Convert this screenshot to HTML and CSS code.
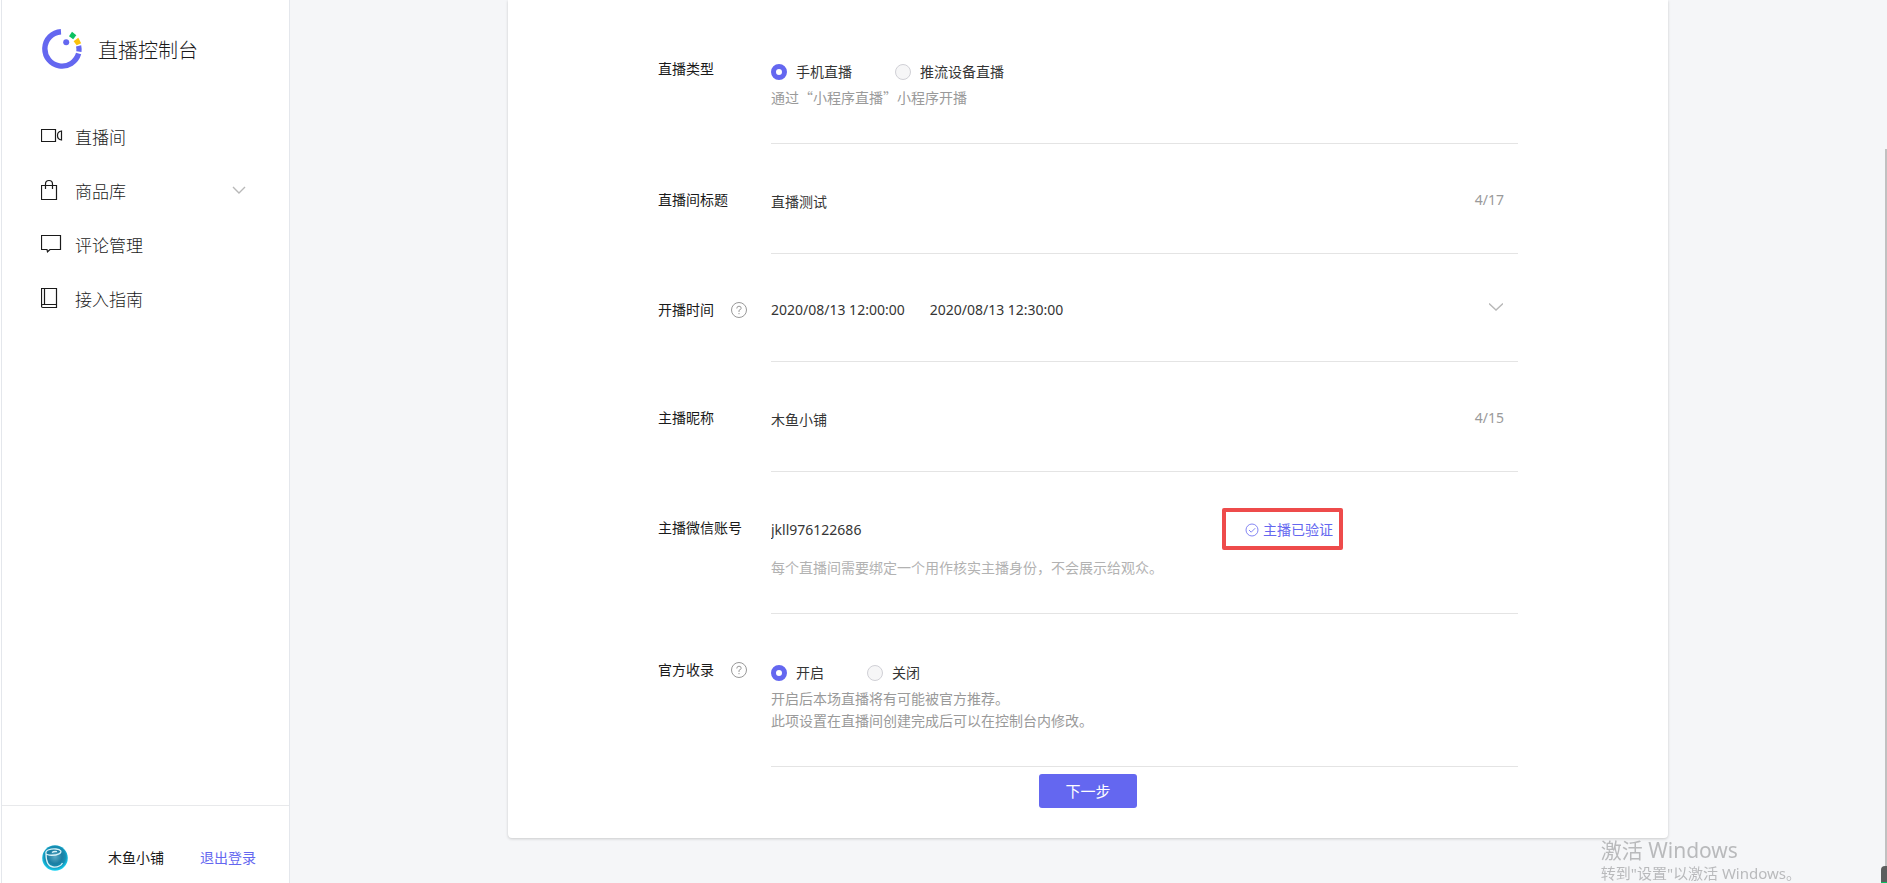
FILE: index.html
```html
<!DOCTYPE html>
<html lang="zh-CN">
<head>
<meta charset="utf-8">
<title>直播控制台</title>
<link rel="stylesheet" href="styles.css">
</head>
<body>
<div class="app">
  <aside class="sidebar">
    <div class="brand">
      <svg class="brand-logo" viewBox="0 0 40 40" aria-hidden="true">
        <path d="M19 2.700A17.200 17.200 0 1 0 36.600 24.600" fill="none" stroke="#6467f0" stroke-width="5.400"/>
        <path d="M34 17.400L39.200 16.200Q39.900 19.500 39.500 23L34.300 22.200Q34.600 19.500 34 17.400Z" fill="#6467f0"/>
        <path d="M31.600 12.200L36.300 8.800L39.200 14.200L34.600 16.200Z" fill="#fbc30c"/>
        <path d="M27 7.200L30 2.800L34.300 6.200L31.200 10.200Z" fill="#0cc160"/>
        <circle cx="24.200" cy="13.300" r="3" fill="#6467f0"/>
      </svg>
      <span class="brand-name">直播控制台</span>
    </div>
    <nav class="menu">
      <a class="menu-item" href="#rooms">
        <svg class="menu-icon" viewBox="0 0 22 22" aria-hidden="true"><path d="M.5 4.500h14v12h-14zM20.500 6q-4 .5-4 4.500t4 4.500z"/></svg>
        <span class="menu-text">直播间</span>
      </a>
      <a class="menu-item" href="#goods">
        <svg class="menu-icon" viewBox="0 0 22 22" aria-hidden="true"><path d="M.5 6.500h15v14h-15zM4.500 10V5q0-3.500 3.500-3.500T11.500 5v5"/></svg>
        <span class="menu-text">商品库</span>
        <svg class="chevron menu-chevron" viewBox="0 0 14 8" aria-hidden="true"><path d="M1 1l6 6 6-6"/></svg>
      </a>
      <a class="menu-item" href="#comments">
        <svg class="menu-icon" viewBox="0 0 22 22" aria-hidden="true"><path d="M.5 2.500h19v14H9l-2.500 2.300L6 16.500H.5z"/></svg>
        <span class="menu-text">评论管理</span>
      </a>
      <a class="menu-item" href="#guide">
        <svg class="menu-icon" viewBox="0 0 22 22" aria-hidden="true"><path d="M.5 1.500h15v19H2q-1.500 0-1.500-1.500zM3.500 1.500v16M15.500 17.500H2q-1.500 0-1.500 1.500"/></svg>
        <span class="menu-text">接入指南</span>
      </a>
    </nav>
    <div class="account">
      <svg class="avatar" viewBox="0 0 26 26" aria-hidden="true">
        <defs>
          <radialGradient id="orb" cx=".5" cy=".45" r=".55">
            <stop offset="0" stop-color="#5aa9c4"/>
            <stop offset=".5" stop-color="#1b7ea3"/>
            <stop offset=".75" stop-color="#1590b5"/>
            <stop offset="1" stop-color="#18d8f8"/>
          </radialGradient>
        </defs>
        <circle cx="13" cy="13" r="12.800" fill="url(#orb)"/>
        <path d="M4 8.500C3 5 9 3.500 14 4S20.500 7 17 8.800 5.500 11 4 8.500zM4 8.500C4 16 6 21.500 11 22s8-1.500 9.500-4M10 7.500q2-1.500 5-.8" fill="none" stroke="#d9f2f7" stroke-width="1.300"/>
      </svg>
      <span class="account-name">木鱼小铺</span>
      <a class="logout" href="#logout">退出登录</a>
    </div>
  </aside>

  <main class="content">
    <form class="card">
      <div class="row">
        <div class="label" id="type-label">直播类型</div>
        <div class="field" role="radiogroup" aria-labelledby="type-label">
          <div class="options">
            <label class="option"><input class="radio" type="radio" name="type" checked>手机直播</label>
            <label class="option"><input class="radio" type="radio" name="type">推流设备直播</label>
          </div>
          <p class="hint">通过“小程序直播”小程序开播</p>
        </div>
      </div>

      <div class="row">
        <label class="label" for="title">直播间标题</label>
        <div class="field">
          <div class="line">
            <input class="text" id="title" type="text" value="直播测试" maxlength="17">
            <span class="counter">4/17</span>
          </div>
        </div>
      </div>

      <div class="row">
        <div class="label" id="time-label">开播时间
          <svg class="help" viewBox="0 0 16 16" aria-hidden="true"><circle cx="8" cy="8" r="7.500"/><path d="M5.800 6.500q0-2.300 2.200-2.300t2.200 2Q10.200 7.500 8 8.300V10M8 11v1.200"/></svg>
        </div>
        <div class="field">
          <button class="period" type="button" aria-labelledby="time-label">
            <span>2020/08/13 12:00:00</span>
            <span>2020/08/13 12:30:00</span>
            <svg class="chevron period-chevron" viewBox="0 0 14 8" aria-hidden="true"><path d="M0 .5l7 6.500 7-6.500"/></svg>
          </button>
        </div>
      </div>

      <div class="row">
        <label class="label" for="nickname">主播昵称</label>
        <div class="field">
          <div class="line">
            <input class="text" id="nickname" type="text" value="木鱼小铺" maxlength="15">
            <span class="counter">4/15</span>
          </div>
        </div>
      </div>

      <div class="row">
        <label class="label" for="wechat">主播微信账号</label>
        <div class="field">
          <div class="line">
            <input class="text text-wechat" id="wechat" type="text" value="jkll976122686">
            <span class="verified">
              <svg class="verified-icon" viewBox="0 0 14 14" aria-hidden="true"><circle cx="7" cy="7" r="6"/><path d="M4 7l2.200 2.200L10.200 5.200"/></svg>
              主播已验证
            </span>
          </div>
          <p class="hint hint-light">每个直播间需要绑定一个用作核实主播身份，不会展示给观众。</p>
        </div>
      </div>

      <div class="row">
        <div class="label" id="listing-label">官方收录
          <svg class="help" viewBox="0 0 16 16" aria-hidden="true"><circle cx="8" cy="8" r="7.500"/><path d="M5.800 6.500q0-2.300 2.200-2.300t2.200 2Q10.200 7.500 8 8.300V10M8 11v1.200"/></svg>
        </div>
        <div class="field" role="radiogroup" aria-labelledby="listing-label">
          <div class="options">
            <label class="option"><input class="radio" type="radio" name="listing" checked>开启</label>
            <label class="option"><input class="radio" type="radio" name="listing">关闭</label>
          </div>
          <p class="hint">开启后本场直播将有可能被官方推荐。<br>此项设置在直播间创建完成后可以在控制台内修改。</p>
        </div>
      </div>

      <div class="actions">
        <button class="next" type="submit">下一步</button>
      </div>
    </form>
  </main>
</div>

<div class="watermark">
  <div class="watermark-title">激活 Windows</div>
  <div class="watermark-text">转到"设置"以激活 Windows。</div>
</div>
<div class="scroll-thumb"></div>
<div class="dock"></div>
</body>
</html>
```

FILE: styles.css
```css
* {
  box-sizing: border-box;
}

body {
  margin: 0;
  background: #f5f6f8;
  color: #1a1a1a;
  font: 14px/22px "Noto Sans", "Noto Sans CJK SC", sans-serif;
  overflow: hidden;
}

a {
  color: inherit;
  text-decoration: none;
}

p {
  margin: 0;
}

button,
input {
  border: 0;
  background: none;
  padding: 0;
  color: inherit;
  font: inherit;
}

.app {
  display: flex;
  min-height: 100vh;
  border-left: 1px solid #fff;
}

/* Sidebar */
.sidebar {
  display: flex;
  flex: 0 0 289px;
  flex-direction: column;
  height: 100vh;
  border: solid #e4e7ec;
  border-width: 0 1px;
  background: #fff;
}

.brand {
  display: flex;
  align-items: center;
  gap: 16px;
  padding: 29px 40px 0;
}

.brand-logo {
  width: 40px;
  height: 40px;
}

.brand-name {
  padding-top: 3px;
  font-size: 20px;
  font-weight: 300;
}

.menu {
  display: flex;
  flex: 1;
  flex-direction: column;
  padding: 40px 43px 0 39px;
}

.menu-item {
  display: flex;
  align-items: center;
  gap: 12px;
  height: 54px;
  font-size: 17px;
  font-weight: 300;
}

.menu-text {
  padding-top: 3px;
}

.menu-icon {
  width: 22px;
  height: 22px;
  fill: none;
  stroke: #1a1a1a;
  stroke-width: 1.2;
}

.chevron {
  fill: none;
  stroke: #b8b8b8;
  stroke-width: 1.4;
}

.menu-chevron {
  width: 14px;
  height: 8px;
  margin-left: auto;
}

.account {
  display: flex;
  align-items: center;
  height: 78px;
  padding: 27px 32px 0 40px;
  border-top: 1px solid #e8e9eb;
}

.avatar {
  width: 26px;
  height: 26px;
}

.account-name {
  margin: 0 36px 0 40px;
}

.logout {
  color: #6467f0;
}

/* Form card */
.content {
  flex: 1;
  padding-right: 1px;
}

.card {
  max-width: 1160px;
  margin: 0 auto;
  padding: 13px 150px 30px;
  border-radius: 0 0 4px 4px;
  background: #fff;
  box-shadow: 0 1px 3px rgba(0, 0, 0, .18);
}

.row {
  display: grid;
  grid-template-columns: 113px 1fr;
}

.label {
  display: flex;
  align-items: center;
  align-self: start;
  gap: 17px;
  height: 22px;
  margin-top: 45px;
}

.help {
  width: 16px;
  height: 16px;
  fill: none;
  stroke: #999;
}

.field {
  padding: 45px 0 35px;
  border-bottom: 1px solid #e4e4e4;
  color: #353535;
}

.options {
  display: flex;
  gap: 43px;
  height: 28px;
}

.option {
  display: flex;
  align-items: center;
  gap: 9px;
}

.radio {
  width: 16px;
  height: 16px;
  margin: 0;
  border: 1px solid #d0d0d6;
  border-radius: 50%;
  background: #f6f6f7;
  appearance: none;
}

.radio:checked {
  border: 5px solid #6467f0;
  background: #fff;
}

.hint {
  color: #9a9a9a;
  font-family: "Noto Sans CJK SC", sans-serif;
}

.hint-light {
  margin-top: 13px;
  color: #b2b2b2;
}

.line {
  display: flex;
  align-items: center;
  height: 26px;
}

.line:last-child {
  margin-bottom: 3px;
}

.text {
  flex: 1;
  align-self: flex-start;
  min-width: 0;
  height: 24px;
}

.text-wechat {
  flex: 0 1 474px;
}

.counter {
  align-self: flex-start;
  padding-right: 14px;
  color: #9a9a9a;
}

.period {
  display: flex;
  align-items: center;
  gap: 25px;
  width: 100%;
  height: 22px;
  margin-bottom: 5px;
  padding-right: 15px;
}

.period-chevron {
  align-self: flex-start;
  width: 14px;
  height: 8px;
  margin: 4px 0 0 auto;
}

.verified {
  position: relative;
  display: flex;
  align-items: center;
  gap: 4px;
  color: #6467f0;
}

.verified::after {
  position: absolute;
  inset: -11px -10px -9px -23px;
  border: 4px solid #ee4b4b;
  border-radius: 2px;
  content: "";
}

.verified-icon {
  width: 14px;
  height: 14px;
  fill: none;
  stroke: #6467f0;
  stroke-width: .8;
}

.actions {
  display: flex;
  justify-content: center;
  padding-top: 7px;
}

.next {
  width: 98px;
  height: 34px;
  border-radius: 3px;
  background: #6467f0;
  color: #fff;
  font-size: 15px;
}

/* Desktop overlays */
.watermark {
  position: fixed;
  right: 86px;
  bottom: -1px;
  color: #b9babc;
  pointer-events: none;
}

.watermark-title {
  font-size: 21px;
  line-height: 24px;
}

.watermark-text {
  font-size: 15px;
  line-height: 22px;
}

.scroll-thumb {
  position: fixed;
  top: 149px;
  right: 0;
  bottom: 0;
  width: 2px;
  background: #c1c1c1;
}

.dock {
  position: fixed;
  right: 0;
  bottom: 0;
  width: 6px;
  height: 17px;
  border-bottom: 1px solid #07c160;
  border-radius: 4px 0 0;
  background: #5c5e5e;
}
```
